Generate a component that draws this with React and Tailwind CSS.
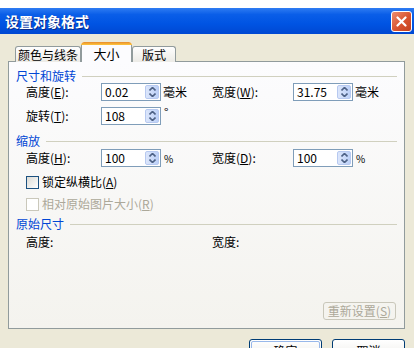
import React from 'react';

function Spin() {
  return (
    <div className="flex flex-col w-[14px] my-[1px] mr-[1px] rounded-[2px] border border-[#b7c9f0] bg-[linear-gradient(to_right,#dce6fb,#bcd0f7)]">
      <div className="flex-1 flex items-center justify-center">
        <svg width="7" height="4" viewBox="0 0 7 4"><path d="M0.5 3.5 L3.5 0.5 L6.5 3.5" fill="none" stroke="#4d6185" strokeWidth="1.6" /></svg>
      </div>
      <div className="flex-1 flex items-center justify-center">
        <svg width="7" height="4" viewBox="0 0 7 4"><path d="M0.5 0.5 L3.5 3.5 L6.5 0.5" fill="none" stroke="#4d6185" strokeWidth="1.6" /></svg>
      </div>
    </div>
  );
}

function NumBox({ value }) {
  return (
    <div className="flex h-[18px] w-[60px] border border-[#7f9db9] bg-white">
      <span className="flex-1 pl-[3px] text-[12px] leading-[16px]">{value}</span>
      <Spin />
    </div>
  );
}

function Label({ text, k, w }) {
  return (
    <span className={`${w} whitespace-nowrap`}>
      {text}(<span className="underline">{k}</span>):
    </span>
  );
}

function Header({ children, mt }) {
  return (
    <div className={`flex items-center h-[14px] pl-[7px] pr-[7px] ${mt}`}>
      <span className="text-[#0046d5] leading-[14px]">{children}</span>
      <div className="flex-1 h-px bg-[#d0d0bf] ml-[6px]" />
    </div>
  );
}

export default function App() {
  return (
    <div className="w-[414px] h-[348px] overflow-hidden bg-white font-['Noto_Sans_CJK_SC',sans-serif] text-[12px] text-black">
      <div className="h-[8px] bg-white" />
      <div className="h-[26px] flex items-center justify-between pl-[5px] pr-[2px] bg-[linear-gradient(#2f7cf2_0%,#0a5ee8_25%,#0054e3_60%,#0048d2_100%)]">
        <span className="text-white font-bold text-[14px] leading-[26px] [text-shadow:1px_1px_0_#0a2a8a]">设置对象格式</span>
        <div className="w-[21px] h-[21px] rounded-[3px] border border-white flex items-center justify-center bg-[linear-gradient(135deg,#ec8d6f,#d9532f_55%,#c2411f)]">
          <svg width="11" height="11" viewBox="0 0 11 11"><path d="M1.5 1.5 L9.5 9.5 M9.5 1.5 L1.5 9.5" stroke="white" strokeWidth="2.2" strokeLinecap="round" /></svg>
        </div>
      </div>
      <div className="h-[314px] bg-[#ece9d8] pt-[8px]">
        <div className="relative z-10 -mb-px flex items-end h-[20px] pl-[15px]">
          <div className="w-[66px] h-[16px] border border-b-0 border-[#919b9c] rounded-t-[3px] bg-[linear-gradient(#fefefe,#ecebe6)] flex items-center justify-center leading-[14px]">颜色与线条</div>
          <div className="w-[51px] h-[20px] flex flex-col rounded-t-[3px] overflow-hidden bg-[#fcfcfe]">
            <div className="h-[3px] bg-[linear-gradient(#e68b2c,#ffc73c)] rounded-t-[3px]" />
            <div className="flex-1 border-x border-[#919b9c] flex items-center justify-center leading-[14px] text-[13px]">大小</div>
          </div>
          <div className="w-[44px] h-[16px] border border-b-0 border-[#919b9c] rounded-t-[3px] bg-[linear-gradient(#fefefe,#ecebe6)] flex items-center justify-center leading-[14px]">版式</div>
        </div>
        <div className="ml-[8px] w-[397px] h-[268px] border border-[#919b9c] bg-[linear-gradient(#fcfcfe,#f4f3ee)] flex flex-col">
          <Header mt="mt-[7px]">尺寸和旋转</Header>
          <div className="flex items-center h-[18px] pl-[17px]">
            <div className="w-[186px] flex items-center">
              <Label text="高度" k="E" w="w-[75px]" />
              <NumBox value="0.02" />
              <span className="ml-[2px]">毫米</span>
            </div>
            <div className="flex items-center">
              <Label text="宽度" k="W" w="w-[81px]" />
              <NumBox value="31.75" />
              <span className="ml-[2px]">毫米</span>
            </div>
          </div>
          <div className="flex items-center h-[18px] pl-[17px] mt-[6px]">
            <Label text="旋转" k="T" w="w-[75px]" />
            <NumBox value="108" />
            <span className="ml-[3px] self-start leading-[10px]">°</span>
          </div>
          <Header mt="mt-[9px]">缩放</Header>
          <div className="flex items-center h-[18px] pl-[17px] mt-[1px]">
            <div className="w-[186px] flex items-center">
              <Label text="高度" k="H" w="w-[75px]" />
              <NumBox value="100" />
              <span className="ml-[3px] text-[10px]">%</span>
            </div>
            <div className="flex items-center">
              <Label text="宽度" k="D" w="w-[81px]" />
              <NumBox value="100" />
              <span className="ml-[3px] text-[10px]">%</span>
            </div>
          </div>
          <div className="flex items-center h-[16px] pl-[17px] mt-[7px]">
            <div className="w-[13px] h-[13px] border border-[#1c5180] bg-[linear-gradient(135deg,#dcdbd5,#ffffff)]" />
            <span className="ml-[3px] leading-[16px]">锁定纵横比(<span className="underline">A</span>)</span>
          </div>
          <div className="flex items-center h-[16px] pl-[17px] mt-[6px] text-[#aca899]">
            <div className="w-[13px] h-[13px] border border-[#cac8bb] bg-white" />
            <span className="ml-[3px] leading-[16px]">相对原始图片大小(<span className="underline">R</span>)</span>
          </div>
          <Header mt="mt-[5px]">原始尺寸</Header>
          <div className="flex items-center h-[14px] pl-[17px] mt-[4px] leading-[14px]">
            <span className="w-[186px]">高度:</span>
            <span>宽度:</span>
          </div>
          <div className="flex-1" />
          <div className="flex justify-end pr-[8px] pb-[8px]">
            <div className="w-[73px] h-[18px] rounded-[3px] border border-[#c9c7ba] flex items-center justify-center text-[#aca899] leading-[16px]">重新设置(<span className="underline">S</span>)</div>
          </div>
        </div>
        <div className="flex justify-end gap-[10px] pr-[9px] mt-[10px]">
          <div className="w-[73px] h-[23px] rounded-[3px] border border-[#003c74] bg-[linear-gradient(#ffffff,#ecebe6)] p-px">
            <div className="h-full rounded-[2px] border border-[#98b8ea] flex items-start justify-center pt-[2px] leading-[14px]">确定</div>
          </div>
          <div className="w-[73px] h-[23px] rounded-[3px] border border-[#003c74] bg-[linear-gradient(#ffffff,#ecebe6)] flex items-start justify-center pt-[4px] leading-[14px]">取消</div>
        </div>
      </div>
    </div>
  );
}
